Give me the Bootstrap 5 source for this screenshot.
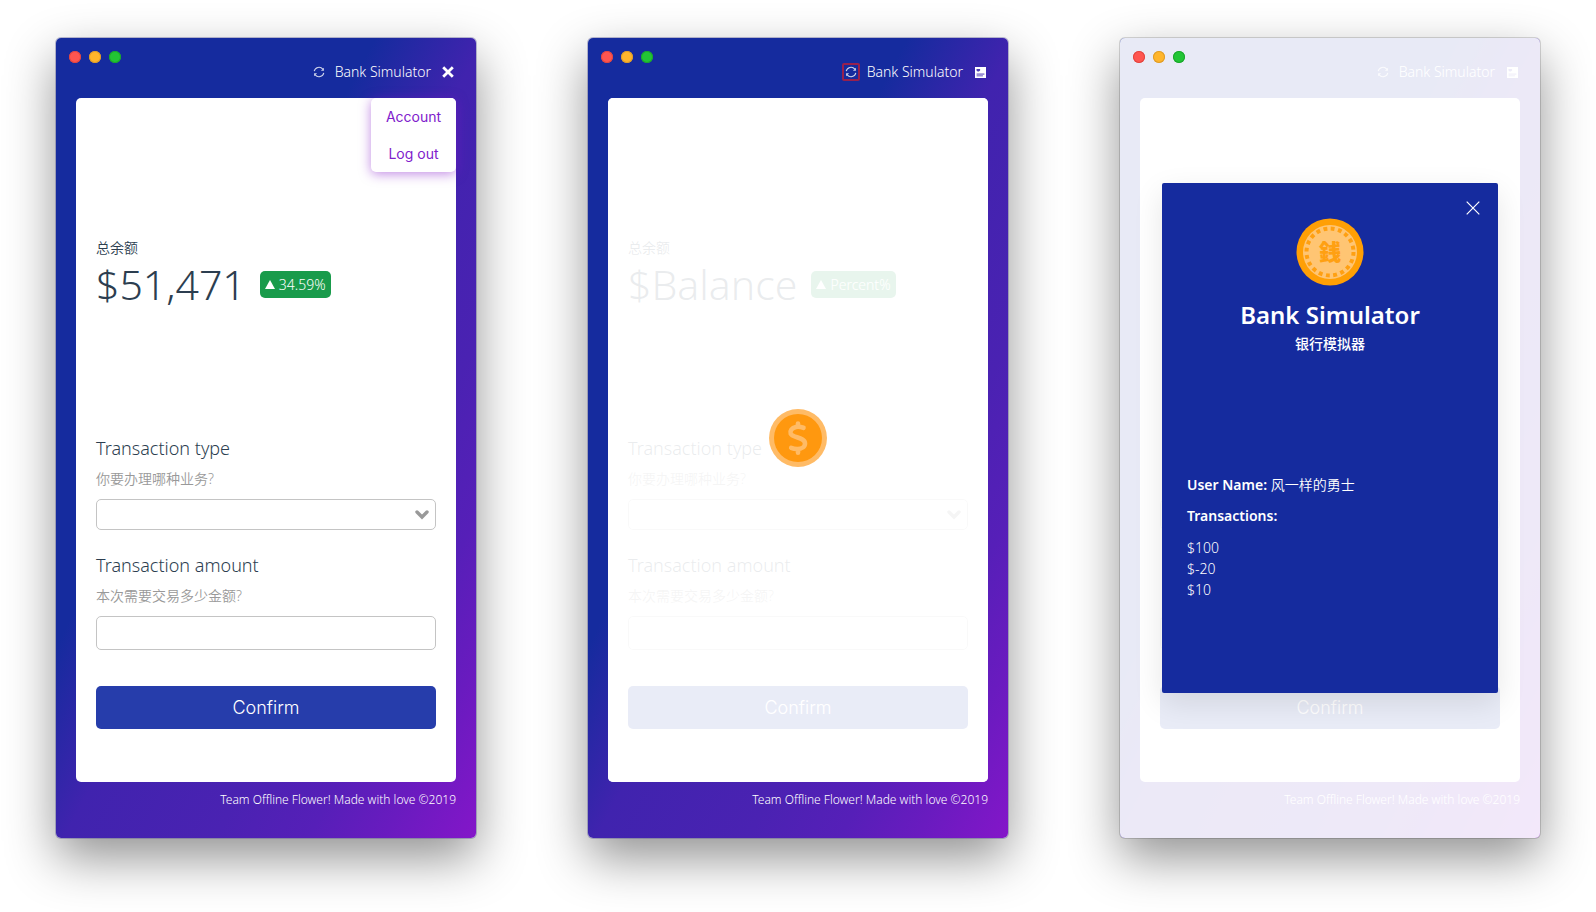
<!DOCTYPE html>
<html lang="en">
<head>
<meta charset="utf-8">
<meta name="viewport" content="width=device-width, initial-scale=1">
<title>Bank Simulator</title>
<link href="https://cdn.jsdelivr.net/npm/bootstrap@5.3.0/dist/css/bootstrap.min.css" rel="stylesheet">
<style>
  body { font-family: "Noto Sans", "Noto Sans CJK SC", sans-serif; font-weight: 350; font-size: 14px; line-height: 20px; color: #2c3e50; background: #fff; }
  .stage { padding: 38px 0; min-height: 100vh; }
  .app-window { flex: 0 1 420px; border-radius: 5px; padding: 0 20px; background: linear-gradient(to bottom right, #152b9e 38%, #4023ae 51%, #4a22b2 69%, #561fb8 80%, #691bbf 89%, #8416c9 100%); box-shadow: 0 0 0 1px rgba(90,90,150,.4), 0 20px 50px rgba(0,0,0,.43); }
  .dots { gap: 8px; margin-left: -7px; padding-top: 13px; z-index: 3; }
  .dot { width: 12px; height: 12px; border-radius: 50%; }
  .dot-r { background: #ff5550; box-shadow: inset 0 0 0 1px #e04640; }
  .dot-y { background: #ffb52b; box-shadow: inset 0 0 0 1px #dd9c2a; }
  .dot-g { background: #22c535; box-shadow: inset 0 0 0 1px #1ba52c; }
  .top-bar { height: 18px; color: #fff; margin-bottom: 17px; }
  .icon-btn { border: 0; padding: 0; background: none; color: inherit; display: flex; align-items: center; justify-content: center; width: 18px; height: 18px; }
  .icon-btn.slim { width: 16px; }
  .icon-btn.hot { box-shadow: inset 0 0 0 2px #97204e; border-radius: 2px; }
  .brand-text { margin: 0 9px 0 7px; font-size: 14px; line-height: 18px; }
  .pane { background: #fff; border-radius: 5px; padding: 140px 20px 53px; }
  .balance { font-size: 41px; line-height: 48px; margin-top: 2px; margin-bottom: 129px; gap: 14px; }
  .rate { height: 27px; padding: 0 5px; gap: 4px; border-radius: 5px; background: #199b4b; color: #fff; font-size: 14px; line-height: 27px; }
  .field-name { font-size: 18px; line-height: 22px; }
  .hint { color: #999; margin: 10px 0; }
  .box { border: 1px solid #c4c4c4; border-radius: 5px; background: #fff; width: 100%; display: block; padding: 0 10px; }
  select.box { height: 31px; appearance: none; }
  input.box { height: 34px; }
  .pick { margin-bottom: 24px; }
  .arrow { right: 7px; top: 11px; pointer-events: none; }
  .confirm { border: 0; border-radius: 5px; height: 43px; margin-top: 36px; background: #263dab; color: #fff; font: 350 18px/24px Inter, sans-serif; }
  .foot { color: #fff; font-size: 12px; line-height: 18px; padding: 9px 0 29px; }
  .menu { top: 0; right: 0; width: 85px; background: #fff; border-radius: 5px; box-shadow: 0 2px 12px rgba(132,22,201,.5); }
  .menu a { display: block; font: 400 14px/37px Inter, sans-serif; text-align: center; text-decoration: none; color: #8020cc; }
  .veil { inset: 0; background: rgba(255,255,255,.9); border-radius: 5px; }
  .coin-wait { left: 50%; top: 50%; margin: -31px 0 0 -29px; }
  .pale { box-shadow: 0 0 0 1px rgba(0,0,0,.15), 0 20px 50px rgba(0,0,0,.43); }
  .bare { padding-top: 401px; }
  .bare .pick { margin-bottom: 86px; }
  .sheet { z-index: 2; left: 10%; right: 10%; top: 145px; height: 510px; background: #152b9e; color: #fff; border-radius: 2px; padding: 35px 25px; box-shadow: 0 10px 30px rgba(0,0,0,.1); }
  .sheet h1 { font-size: 24px; line-height: 32px; font-weight: 600; margin: 13px 0 3px; }
  .sheet h2 { font-size: 14px; line-height: 20px; font-weight: 500; margin: 0 0 121px; }
  .sheet b { font-weight: 600; }
  .shut { right: 16px; top: 16px; }
  .sheet p { margin: 0 0 11px; }
  .sheet li { line-height: 21px; }
</style>
</head>
<body>
<svg width="0" height="0" class="position-absolute" aria-hidden="true">
  <symbol id="sync" viewBox="0 0 12 12"><g fill="none" stroke="currentColor" stroke-width="1.1"><path d="M1.2 5.2A4.9 4.9 0 0 1 9.8 3.1M10.8 6.8A4.9 4.9 0 0 1 2.2 8.9"/></g><path fill="currentColor" d="M10.9 1.7v3.1H7.9zM1.1 10.3V7.2h3z"/></symbol>
  <symbol id="cardicon" viewBox="0 0 11 11"><path fill="#fff" d="M0 0h11v11H0z"/><path fill="#4c3cb4" d="M1.5 2h3.6v1.6L3.8 4.4H2.6L1.5 3.4z"/><path fill="#9b90d4" d="M1.6 6.2h7.8v1.9H7.9v1.4H1.6z"/></symbol>
  <symbol id="chev" viewBox="0 0 14 10"><path d="M2 2l5 5 5-5" fill="none" stroke="#999" stroke-width="3.4" stroke-linecap="round" stroke-linejoin="miter"/></symbol>
  <symbol id="tri" viewBox="0 0 10 9"><path d="M5 0l5 9H0z" fill="#fff"/></symbol>
</svg>
<main class="stage d-flex justify-content-around align-items-start">

  <section class="app-window">
    <div class="dots d-flex position-relative"><span class="dot dot-r"></span><span class="dot dot-y"></span><span class="dot dot-g"></span></div>
    <header class="top-bar d-flex align-items-center justify-content-end">
      <button class="icon-btn" aria-label="Refresh"><svg width="12" height="12" opacity=".8"><use href="#sync"/></svg></button>
      <span class="brand-text">Bank Simulator</span>
      <button class="icon-btn slim" aria-label="Close menu"><svg width="12" height="12" viewBox="0 0 12 12"><path d="M1.200 1.200l9.600 9.600M10.800 1.200l-9.600 9.600" stroke="#fff" stroke-width="2.8"/></svg></button>
    </header>
    <div class="pane position-relative">
      <nav class="menu position-absolute"><a href="#">Account</a><a href="#">Log out</a></nav>
      <div>总余额</div>
      <div class="balance d-flex align-items-center"><span>$51,471</span><span class="rate d-flex align-items-center"><svg width="10" height="9"><use href="#tri"/></svg>34.59%</span></div>
      <label class="field-name d-block" for="type1">Transaction type</label>
      <div class="hint">你要办理哪种业务?</div>
      <div class="pick position-relative"><select class="box" id="type1"></select><svg class="arrow position-absolute" width="14" height="10"><use href="#chev"/></svg></div>
      <label class="field-name d-block" for="amount1">Transaction amount</label>
      <div class="hint">本次需要交易多少金额?</div>
      <input class="box" id="amount1" type="text">
      <button class="confirm d-block w-100">Confirm</button>
    </div>
    <footer class="foot text-end">Team Offline Flower! Made with love ©2019</footer>
  </section>

  <section class="app-window">
    <div class="dots d-flex position-relative"><span class="dot dot-r"></span><span class="dot dot-y"></span><span class="dot dot-g"></span></div>
    <header class="top-bar d-flex align-items-center justify-content-end">
      <button class="icon-btn hot" aria-label="Refresh"><svg width="12" height="12" opacity=".8"><use href="#sync"/></svg></button>
      <span class="brand-text">Bank Simulator</span>
      <button class="icon-btn slim" aria-label="Open menu"><svg width="11" height="11"><use href="#cardicon"/></svg></button>
    </header>
    <div class="pane position-relative">
      <div>总余额</div>
      <div class="balance d-flex align-items-center"><span>$Balance</span><span class="rate d-flex align-items-center"><svg width="10" height="9"><use href="#tri"/></svg>Percent%</span></div>
      <label class="field-name d-block" for="type2">Transaction type</label>
      <div class="hint">你要办理哪种业务?</div>
      <div class="pick position-relative"><select class="box" id="type2"></select><svg class="arrow position-absolute" width="14" height="10"><use href="#chev"/></svg></div>
      <label class="field-name d-block" for="amount2">Transaction amount</label>
      <div class="hint">本次需要交易多少金额?</div>
      <input class="box" id="amount2" type="text">
      <button class="confirm d-block w-100">Confirm</button>
      <div class="veil position-absolute">
        <svg class="coin-wait position-absolute" width="58" height="58" viewBox="0 0 58 58"><circle cx="29" cy="29" r="29" fill="#ffbb66"/><circle cx="29" cy="29" r="24" fill="#ff980f"/><path d="M34.500 18.800c-3-1-5.500-1.300-7.500-.8-4.300 1-6.300 4-5.300 6.800 1.500 4 14.300 3.400 14.300 9.700 0 3.300-3.500 5.500-7.500 5.500-2.300 0-4.300-.3-6.300-1.200M29 14.500v3M29 40v3.700" fill="none" stroke="#ffbb66" stroke-width="4.600" stroke-linecap="round" stroke-linejoin="round"/></svg>
      </div>
    </div>
    <footer class="foot text-end">Team Offline Flower! Made with love ©2019</footer>
  </section>

  <section class="app-window pale position-relative">
    <div class="dots d-flex position-relative"><span class="dot dot-r"></span><span class="dot dot-y"></span><span class="dot dot-g"></span></div>
    <header class="top-bar d-flex align-items-center justify-content-end">
      <button class="icon-btn" aria-label="Refresh"><svg width="12" height="12" opacity=".8"><use href="#sync"/></svg></button>
      <span class="brand-text">Bank Simulator</span>
      <button class="icon-btn slim" aria-label="Open menu"><svg width="11" height="11"><use href="#cardicon"/></svg></button>
    </header>
    <div class="pane bare">
      <div class="pick"><select class="box" aria-label="Transaction type"></select></div>
      <input class="box" type="text" aria-label="Transaction amount">
      <button class="confirm d-block w-100">Confirm</button>
    </div>
    <footer class="foot text-end">Team Offline Flower! Made with love ©2019</footer>
    <div class="veil position-absolute"></div>
    <div class="sheet position-absolute" role="dialog" aria-label="Account">
      <button class="icon-btn shut position-absolute" aria-label="Close"><svg width="14" height="14" viewBox="0 0 14 14"><path d="M.7.700l12.600 12.600M13.300.700L.7 13.300" stroke="#fff" stroke-width="1.200"/></svg></button>
      <svg class="d-block mx-auto" width="68" height="68" viewBox="0 0 68 68"><circle cx="34" cy="34" r="33.500" fill="#ff9f05"/><circle cx="34" cy="34" r="27" fill="#ffc573"/><circle cx="34" cy="34" r="23.500" fill="none" stroke="#ffa012" stroke-width="4" stroke-dasharray="3.900 3.484"/><text x="34" y="42" text-anchor="middle" font-family="Noto Sans CJK JP, sans-serif" font-weight="900" font-size="22" fill="#ffa012">銭</text></svg>
      <h1 class="text-center">Bank Simulator</h1>
      <h2 class="text-center">银行模拟器</h2>
      <p><b>User Name:</b> 风一样的勇士</p>
      <p><b>Transactions:</b></p>
      <ul class="list-unstyled mb-0"><li>$100</li><li>$-20</li><li>$10</li></ul>
    </div>
  </section>
</main>
<script src="https://cdn.jsdelivr.net/npm/bootstrap@5.3.0/dist/js/bootstrap.bundle.min.js"></script>
</body>
</html>
